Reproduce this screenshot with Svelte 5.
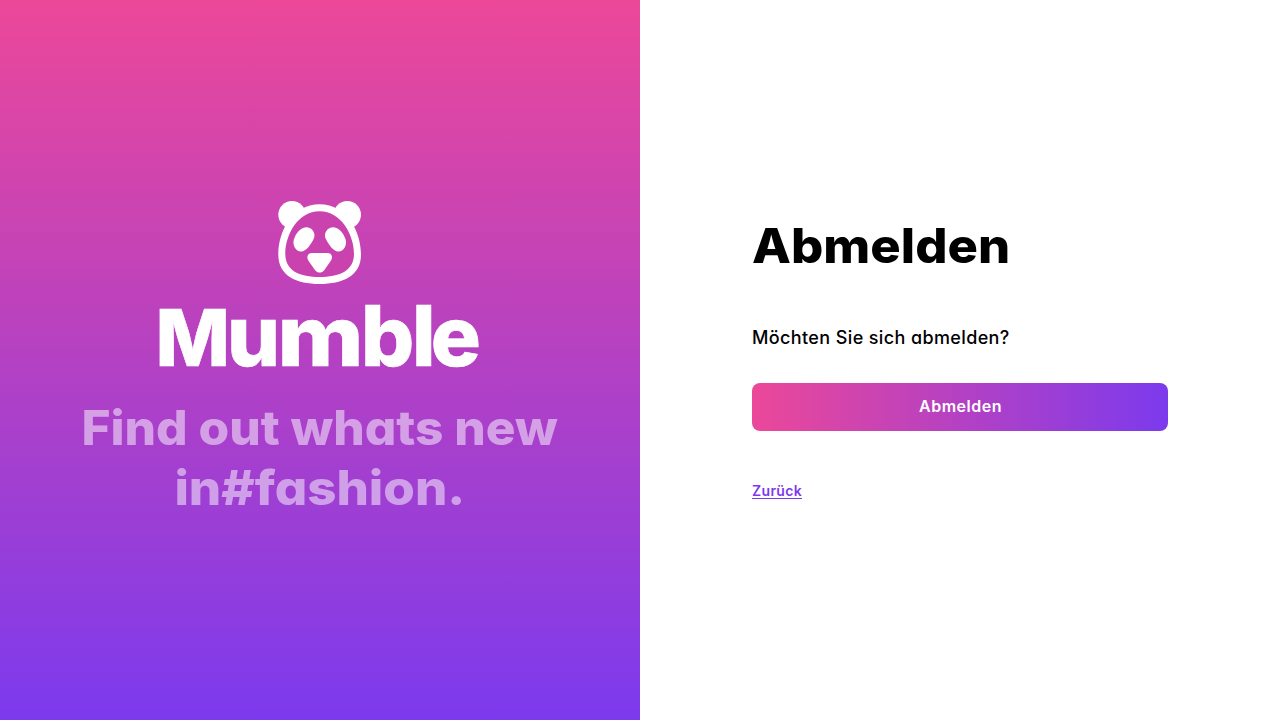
<script lang="ts">
  const title = 'Abmelden';
</script>

<main>
  <section class="brand">
    <svg class="logo" viewBox="0 0 320 168" role="img" aria-label="Mumble">
      <g fill="#fff">
        <circle cx="132" cy="14.7" r="13.7" />
        <circle cx="187.3" cy="14.7" r="13.7" />
      </g>
      <path class="hole" d="M159.6 7.8C135 7.8 121.6 32 121.6 54C121.6 73 137 80.5 159.6 80.5S197.6 73 197.6 54C197.6 32 184 7.8 159.6 7.8Z" />
      <path class="head" fill-rule="evenodd" d="M159.6 4.2C132 4.2 118.3 31.5 118.3 54.5C118.3 76 136.5 84 159.6 84S201 76 201 54.5C201 31.5 187 4.2 159.6 4.2ZM159.6 11.2C181 11.2 194 34.5 194 54C194 71 179 77 159.6 77S125.3 71 125.3 54C125.3 34.5 138 11.2 159.6 11.2Z" />
      <path class="face" d="M147 27.2C152.5 27.5 156.5 34 153.5 39.2C150.5 45 146.3 51.2 141.3 51.5C136 51.8 132.3 45.5 133.8 39.8C135.6 33 141 27 147 27.2Z" />
      <path class="face" d="M172.5 27.2C167 27.5 163 34 166 39.2C169 45 173.2 51.2 178.2 51.5C183.5 51.8 187.2 45.5 185.7 39.8C183.9 33 178.5 27 172.5 27.2Z" />
      <path class="face" d="M152 53H167.5C172 53 173.2 57.5 170.7 61L164.2 70.2C161.9 73.3 157.4 73.3 155.1 70.2L148.6 61C146.1 57.5 147.5 53 152 53Z" />
      <text y="166"><tspan x="-4.4" class="cap">M</tspan><tspan x="67">u</tspan><tspan x="117.5" textLength="86" lengthAdjust="spacingAndGlyphs">m</tspan><tspan x="201 252 270.8">ble</tspan></text>
    </svg>
    <p class="tagline"><span class="one">Find out whats new</span><br /><span class="two">in#fashion.</span></p>
  </section>

  <section class="panel">
    <h1>{title}</h1>
    <p class="question">Möchten Sie sich abmelden?</p>
    <button type="button"><span>{title}</span></button>
    <a href="#back">Zurück</a>
  </section>
</main>

<style>
  :global(body) {
    margin: 0;
    background: #fff;
  }
  main {
    display: grid;
    grid-template-columns: 1fr 1fr;
    height: 100vh;
    overflow: hidden;
    font-family: Inter, sans-serif;
    font-feature-settings: 'cv11';
  }
  .brand {
    display: flex;
    flex-direction: column;
    align-items: center;
    justify-content: center;
    box-sizing: border-box;
    padding-bottom: 2px;
    background: linear-gradient(180deg, #ec4899, #7c3aed);
  }
  .logo {
    display: block;
    width: 320px;
    height: 168px;
    overflow: visible;
  }
  .head,
  .face {
    fill: #fff;
  }
  .hole {
    fill: #c942ae;
  }
  .logo text {
    fill: #fff;
    stroke: #fff;
    stroke-width: 0.6;
    font-size: 83.5px;
    font-weight: 800;
  }
  .logo .cap {
    font-size: 79px;
  }
  .tagline {
    margin: 30px 0 0;
    text-align: center;
    font-size: 48px;
    font-weight: 800;
    line-height: 60px;
    color: rgba(255, 255, 255, 0.5);
    white-space: nowrap;
  }
  .tagline span {
    display: inline-block;
  }
  .one {
    transform: scaleX(1.033);
  }
  .two {
    transform: scaleX(1.063);
  }
  .panel {
    display: flex;
    flex-direction: column;
    align-items: flex-start;
    justify-content: center;
    box-sizing: border-box;
    padding: 0 112px 5px;
  }
  h1 {
    margin: 0;
    font-size: 48px;
    font-weight: 800;
    line-height: 58px;
    color: #000;
    transform: scaleX(1.056);
    transform-origin: left;
  }
  .question {
    margin: 49px 0 32px;
    font-size: 18px;
    font-weight: 500;
    line-height: 27px;
    letter-spacing: 0.38px;
    color: #000;
    white-space: nowrap;
  }
  button {
    width: 100%;
    height: 48px;
    padding: 0 0 2px 1px;
    border: 0;
    border-radius: 8px;
    background: linear-gradient(90deg, #ec4899, #7c3aed);
    color: #fff;
    font: inherit;
    font-feature-settings: inherit;
    font-size: 16px;
    font-weight: 600;
    letter-spacing: 0.5px;
    line-height: 46px;
  }
  a {
    margin-top: 52px;
    border-bottom: 1px solid #7c3aed;
    color: #7c3aed;
    font-size: 14px;
    font-weight: 600;
    line-height: 15px;
    letter-spacing: 0.35px;
    text-decoration: none;
  }
</style>
